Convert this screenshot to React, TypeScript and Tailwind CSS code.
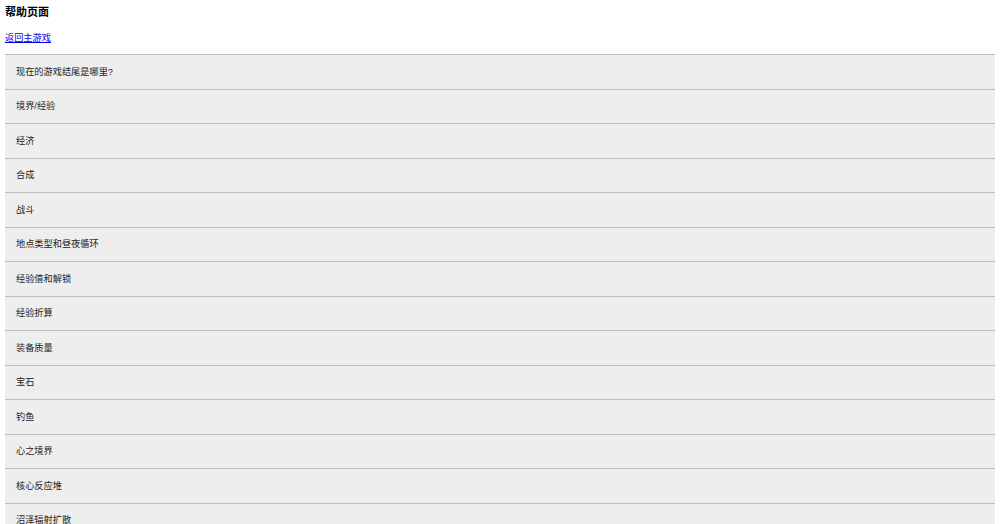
const items = [
  "现在的游戏结尾是哪里?",
  "境界/经验",
  "经济",
  "合成",
  "战斗",
  "地点类型和昼夜循环",
  "经验值和解锁",
  "经验折算",
  "装备质量",
  "宝石",
  "钓鱼",
  "心之境界",
  "核心反应堆",
  "沼泽辐射扩散",
]

export default function App() {
  return (
    <div className="min-h-screen bg-white px-[5px] text-black [font-family:'Liberation_Sans','Noto_Sans_CJK_SC',sans-serif]">
      <h1 className="pt-[5px] text-[11px] leading-[14px] font-semibold">帮助页面</h1>
      <a href="#" className="mt-[13px] block text-[9.2px] leading-[12px] text-[#0000ee] underline">
        返回主游戏
      </a>
      <div className="mt-[10px]">
        {items.map((item) => (
          <div
            key={item}
            className="flex h-[34.5px] items-center border-t-[1.5px] border-[#bdbdbd] bg-[#eeeeee] px-[11px] pt-[2px] text-[9.2px] text-[#222]"
          >
            {item}
          </div>
        ))}
      </div>
    </div>
  )
}
